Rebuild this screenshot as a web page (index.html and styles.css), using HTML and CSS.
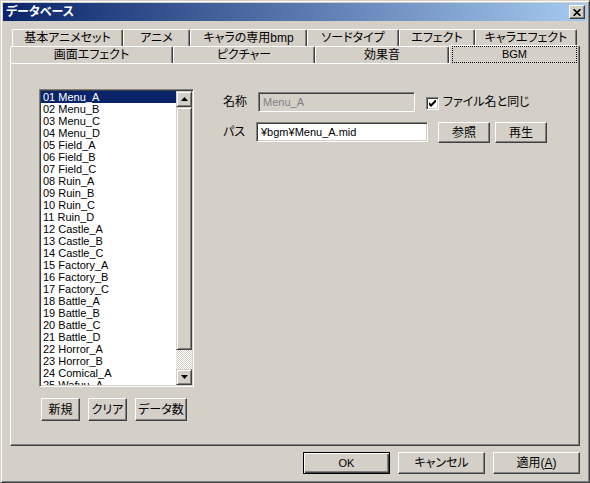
FILE: index.html
```html
<!DOCTYPE html>
<html lang="ja">
<head>
<meta charset="utf-8">
<title>データベース</title>
<link rel="stylesheet" href="styles.css">
</head>
<body>
<div class="window">
  <div class="titlebar">
    <span class="title">データベース</span>
    <span class="close"><svg width="8" height="7" viewBox="0 0 8 7"><path d="M0.6 0.2 L7.4 6.8 M7.4 0.2 L0.6 6.8" stroke="#000" stroke-width="1.7" fill="none"/></svg></span>
  </div>
  <div class="dialog">
    <div class="tabrow back">
      <div class="tab">基本アニメセット</div>
      <div class="tab">アニメ</div>
      <div class="tab">キャラの専用bmp</div>
      <div class="tab">ソードタイプ</div>
      <div class="tab">エフェクト</div>
      <div class="tab">キャラエフェクト</div>
    </div>
    <div class="tabrow front">
      <div class="tab">画面エフェクト</div>
      <div class="tab">ピクチャー</div>
      <div class="tab">効果音</div>
      <div class="tab active"><span class="focus latin">BGM</span></div>
    </div>
    <div class="panel">
      <div class="left-col">
        <div class="listbox">
          <div class="items">
            <div class="item sel">01 Menu_A</div>
            <div class="item">02 Menu_B</div>
            <div class="item">03 Menu_C</div>
            <div class="item">04 Menu_D</div>
            <div class="item">05 Field_A</div>
            <div class="item">06 Field_B</div>
            <div class="item">07 Field_C</div>
            <div class="item">08 Ruin_A</div>
            <div class="item">09 Ruin_B</div>
            <div class="item">10 Ruin_C</div>
            <div class="item">11 Ruin_D</div>
            <div class="item">12 Castle_A</div>
            <div class="item">13 Castle_B</div>
            <div class="item">14 Castle_C</div>
            <div class="item">15 Factory_A</div>
            <div class="item">16 Factory_B</div>
            <div class="item">17 Factory_C</div>
            <div class="item">18 Battle_A</div>
            <div class="item">19 Battle_B</div>
            <div class="item">20 Battle_C</div>
            <div class="item">21 Battle_D</div>
            <div class="item">22 Horror_A</div>
            <div class="item">23 Horror_B</div>
            <div class="item">24 Comical_A</div>
            <div class="item">25 Wafuu_A</div>
          </div>
          <div class="vscroll">
            <div class="sb-btn"><svg width="7" height="4" viewBox="0 0 7 4"><polygon points="3.5,0 7,4 0,4" fill="#000"/></svg></div>
            <div class="sb-thumb"></div>
            <div class="sb-track"></div>
            <div class="sb-btn"><svg width="7" height="4" viewBox="0 0 7 4"><polygon points="0,0 7,0 3.5,4" fill="#000"/></svg></div>
          </div>
        </div>
        <div class="list-buttons">
          <div class="btn b-new">新規</div>
          <div class="btn b-clear">クリア</div>
          <div class="btn b-count">データ数</div>
        </div>
      </div>
      <div class="form">
        <div class="field-row row-name">
          <span class="label l-name">名称</span>
          <div class="input disabled i-name latin">Menu_A</div>
          <span class="checkbox"><svg width="7" height="7" viewBox="0 0 7 7"><polygon points="0,2 2,4 7,-1 7,2 2,7 0,5" fill="#000"/></svg></span>
          <span class="check-label">ファイル名と同じ</span>
        </div>
        <div class="field-row row-path">
          <span class="label l-path">パス</span>
          <div class="input i-path latin">¥bgm¥Menu_A.mid</div>
          <div class="btn b-browse">参照</div>
          <div class="btn b-play">再生</div>
        </div>
      </div>
    </div>
    <div class="dialog-buttons">
      <div class="btn dbtn default latin">OK</div>
      <div class="btn dbtn">キャンセル</div>
      <div class="btn dbtn">適用(<u>A</u>)</div>
    </div>
  </div>
</div>
</body>
</html>
```
FILE: styles.css
```css
* { box-sizing: border-box; }
html, body { margin: 0; padding: 0; }
body {
  width: 590px;
  height: 483px;
  overflow: hidden;
  background: #d4d0c8;
  color: #000;
  font-family: "Liberation Sans", "Noto Sans CJK JP", sans-serif;
  font-size: 12px;
  font-feature-settings: "palt";
}
.latin { font-size: 11px; }

.window {
  width: 590px;
  height: 483px;
  border: 1px solid;
  border-color: #d4d0c8 #404040 #404040 #d4d0c8;
  box-shadow: inset 1px 1px #fff, inset -1px -1px #808080;
  padding: 2px;
  display: flex;
  flex-direction: column;
}

.titlebar {
  height: 18px;
  flex: none;
  background: linear-gradient(to right, #0a246a, #a6caf0);
  display: flex;
  align-items: center;
  justify-content: space-between;
  padding: 0 2px 0 3px;
}
.title { color: #fff; font-weight: bold; font-size: 12px; line-height: 14px; }
.close {
  width: 16px;
  height: 14px;
  background: #d4d0c8;
  border: 1px solid;
  border-color: #fff #404040 #404040 #fff;
  box-shadow: inset -1px -1px #808080;
  display: flex;
  align-items: center;
  justify-content: center;
}
.close svg { display: block; }

.dialog { padding: 8px 7px 0 7px; }

.tabrow { display: flex; height: 17px; }
.tabrow.back { margin-left: 2px; }
.tab {
  flex: none;
  height: 17px;
  border-top: 1px solid #fff;
  border-left: 1px solid #fff;
  border-right: 1px solid #404040;
  box-shadow: inset -1px 0 #808080;
  border-radius: 2px 2px 0 0;
  background: #d4d0c8;
  display: flex;
  align-items: center;
  justify-content: center;
  line-height: 14px;
  white-space: nowrap;
}
.back .tab:nth-child(1) { width: 111px; }
.back .tab:nth-child(2) { width: 67px; }
.back .tab:nth-child(3) { width: 117px; }
.back .tab:nth-child(4) { width: 92px; }
.back .tab:nth-child(5) { width: 76px; }
.back .tab:nth-child(6) { width: 102px; }
.front .tab:nth-child(1) { width: 163px; }
.front .tab:nth-child(2) { width: 142px; }
.front .tab:nth-child(3) { width: 134px; }
.front .tab:nth-child(4) { width: 131px; }
.tab.active {
  height: 19px;
  margin-top: -1px;
  position: relative;
  z-index: 1;
  align-items: flex-start;
}
.focus {
  width: 125px;
  height: 17px;
  border: 1px dotted #000;
  display: flex;
  align-items: center;
  justify-content: center;
  line-height: 13px;
}

.panel {
  height: 383px;
  border: 1px solid;
  border-color: #fff #404040 #404040 #fff;
  box-shadow: inset -1px -1px #808080;
  display: flex;
  align-items: flex-start;
  padding: 25px 0 0 28px;
}

.left-col { width: 155px; flex: none; }
.listbox {
  width: 155px;
  height: 298px;
  border: 1px solid;
  border-color: #808080 #fff #fff #808080;
  box-shadow: inset 1px 1px #404040, inset -1px -1px #d4d0c8;
  padding: 1px;
  background: #fff;
  display: flex;
}
.items {
  flex: 1;
  overflow: hidden;
  font-size: 11px;
  line-height: 12px;
  background: #fff;
}
.item { height: 12px; padding-left: 2px; white-space: nowrap; }
.item.sel { background: #0a246a; color: #fff; }

.vscroll { width: 16px; flex: none; display: flex; flex-direction: column; }
.sb-btn, .sb-thumb {
  background: #d4d0c8;
  border: 1px solid;
  border-color: #d4d0c8 #404040 #404040 #d4d0c8;
  box-shadow: inset 1px 1px #fff, inset -1px -1px #808080;
}
.sb-btn { height: 16px; display: flex; align-items: center; justify-content: center; }
.sb-btn svg { display: block; }
.sb-thumb { height: 243px; }
.sb-track {
  flex: 1;
  background-color: #d4d0c8;
  background-image: repeating-conic-gradient(#fff 0% 25%, #d4d0c8 0% 50%);
  background-size: 2px 2px;
}

.btn {
  background: #d4d0c8;
  border: 1px solid;
  border-color: #fff #404040 #404040 #fff;
  box-shadow: inset -1px -1px #808080;
  display: flex;
  align-items: center;
  justify-content: center;
  white-space: nowrap;
  line-height: 14px;
}

.list-buttons { display: flex; gap: 8px; margin-top: 11px; padding-left: 2px; }
.list-buttons .btn { height: 23px; }
.b-new, .b-clear { width: 39px; }
.b-count { width: 52px; }

.form { margin-left: 29px; }
.field-row { display: flex; align-items: center; }
.row-name { margin-top: 3px; height: 20px; }
.row-path { margin-top: 10px; height: 21px; align-items: flex-start; }
.label { line-height: 14px; }
.row-path .label { margin-top: 3px; }
.l-name { width: 35px; }
.l-path { width: 33px; }

.input {
  height: 20px;
  border: 1px solid;
  border-color: #808080 #fff #fff #808080;
  box-shadow: inset 1px 1px #404040, inset -1px -1px #d4d0c8;
  background: #fff;
  padding: 0 0 0 4px;
  display: flex;
  align-items: center;
  white-space: nowrap;
}
.input.disabled { background: #d4d0c8; color: #808080; }
.i-name { width: 157px; }
.i-path { width: 172px; }

.checkbox {
  width: 13px;
  height: 13px;
  margin-left: 11px;
  margin-top: 3px;
  border: 1px solid;
  border-color: #808080 #fff #fff #808080;
  box-shadow: inset 1px 1px #404040, inset -1px -1px #d4d0c8;
  background: #fff;
  display: flex;
  align-items: center;
  justify-content: center;
}
.checkbox svg { display: block; }
.check-label { margin-left: 4px; line-height: 14px; }

.b-browse, .b-play { width: 52px; height: 21px; }
.b-browse { margin-left: 10px; }
.b-play { margin-left: 5px; }

.dialog-buttons {
  display: flex;
  justify-content: flex-end;
  gap: 8px;
  margin-top: 6px;
}
.dbtn { width: 87px; height: 22px; }
.dbtn.default {
  border: 1px solid #000;
  box-shadow: inset 1px 1px #fff, inset -1px -1px #404040, inset -2px -2px #808080;
}
```
